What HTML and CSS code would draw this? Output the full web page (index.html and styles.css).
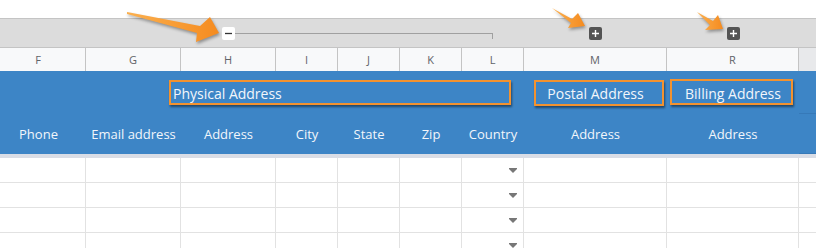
FILE: index.html
```html
<!DOCTYPE html>
<html lang="en">
<head>
<meta charset="UTF-8">
<link rel="stylesheet" href="styles.css">
<title>Grouped address columns</title>
</head>
<body>
<div class="sheet">

<div class="top-gap"></div>

<!-- column group controls -->
<div class="groups grid">
  <div class="grp grp-physical">
    <span class="btn btn-minus"><svg width="13" height="13" viewBox="0 0 13 13"><path d="M3 6.5h7" stroke="#333" stroke-width="1.3"/></svg></span>
    <span class="bracket"></span>
  </div>
  <div class="grp grp-postal">
    <span class="btn btn-plus"><svg width="13" height="13" viewBox="0 0 13 13"><path d="M3 6.5h7M6.5 3v7" stroke="#fff" stroke-width="1.4"/></svg></span>
  </div>
  <div class="grp grp-billing">
    <span class="btn btn-plus"><svg width="13" height="13" viewBox="0 0 13 13"><path d="M3 6.5h7M6.5 3v7" stroke="#fff" stroke-width="1.4"/></svg></span>
  </div>
</div>

<!-- column letters -->
<div class="letters grid">
  <div>F</div><div>G</div><div>H</div><div>I</div><div>J</div>
  <div>K</div><div>L</div><div>M</div><div>R</div><div class="blank"></div>
</div>

<!-- frozen header rows -->
<div class="band">
  <div class="titles grid">
    <div class="title t-physical"><span>Physical Address</span></div>
    <div class="title t-postal"><span>Postal Address</span></div>
    <div class="title t-billing"><span>Billing Address</span></div>
  </div>
  <div class="labels grid">
    <div>Phone</div><div>Email address</div><div>Address</div><div>City</div>
    <div>State</div><div>Zip</div><div>Country</div><div>Address</div>
    <div>Address</div><div class="edge"></div>
  </div>
</div>
<div class="freeze"></div>

<div class="rows">
  <div class="row grid">
    <div></div><div></div><div></div><div></div><div></div><div></div>
    <div class="dd"><svg width="8" height="5" viewBox="0 0 8 5"><path d="M0 0h8v1L4 5 0 1z" fill="#777"/></svg></div>
    <div></div><div></div><div class="blank"></div>
  </div>
  <div class="row grid">
    <div></div><div></div><div></div><div></div><div></div><div></div>
    <div class="dd"><svg width="8" height="5" viewBox="0 0 8 5"><path d="M0 0h8v1L4 5 0 1z" fill="#777"/></svg></div>
    <div></div><div></div><div class="blank"></div>
  </div>
  <div class="row grid">
    <div></div><div></div><div></div><div></div><div></div><div></div>
    <div class="dd"><svg width="8" height="5" viewBox="0 0 8 5"><path d="M0 0h8v1L4 5 0 1z" fill="#777"/></svg></div>
    <div></div><div></div><div class="blank"></div>
  </div>
  <div class="row grid">
    <div></div><div></div><div></div><div></div><div></div><div></div>
    <div class="dd"><svg width="8" height="5" viewBox="0 0 8 5"><path d="M0 0h8v1L4 5 0 1z" fill="#777"/></svg></div>
    <div></div><div></div><div class="blank"></div>
  </div>
</div>

<!-- callout arrows over the group buttons -->
<svg class="arrows" width="816" height="50" viewBox="0 0 816 50">
  <defs>
    <linearGradient id="og" x1="0" y1="0" x2="1" y2="0">
      <stop offset="0" stop-color="#fbb04f"/>
      <stop offset="1" stop-color="#f58b1f"/>
    </linearGradient>
  </defs>
  <g fill="url(#og)" class="arrow-shadow">
    <path d="M127 12 L200 26 L210 17 L219 33 L196 42 L197 33 L127 14 Z"/>
    <path d="M552 8 L572 19 L578 13 L585 26 L568 28 L571 23 Z"/>
    <path d="M697 12 L713 21 L718 15 L723 29 L705 30 L710 25 Z"/>
  </g>
</svg>

</div>
</body>
</html>
```

FILE: styles.css
```css
html, body {margin: 0; padding: 0; overflow: hidden; background: #fff;}
body {font-family: 'Open Sans', 'Liberation Sans', sans-serif; width: 816px; height: 248px;}

.sheet {position: relative; height: 248px;}
/* column F is partly scrolled off the left edge */
.grid {display: grid; margin-left: -9px;
  grid-template-columns: 95px 95px 95px 62px 62px 62px 62px 143px 132px 1fr;}

.top-gap {height: 18px;}

/* group bar */
.groups {height: 29px; box-sizing: border-box; padding-top: 8px;
  background: #dcdcdc; border-top: 1px solid #c4c4c4;}
.grp {display: flex; align-items: flex-start;}
.grp-physical {grid-column: 3 / 8; padding-left: 41px; margin-right: 31px;}
.grp-postal {grid-column: 8; justify-content: center;}
.grp-billing {grid-column: 9; justify-content: center; padding-left: 1px;}
.btn {display: block; width: 13px; height: 13px; border-radius: 2px;}
.btn svg {display: block;}
.btn-minus {background: #fff;}
.btn-plus {background: #545454;}
.bracket {flex: 1; height: 5px; margin-top: 6px;
  border-top: 1px solid #a0a0a0; border-right: 1px solid #a0a0a0;}

/* column letters */
.letters {height: 24px; box-sizing: border-box; border-top: 1px solid #c4c4c4;
  background: #f8f9fa; font-size: 11px; color: #5f6368;}
.letters div {border-right: 1px solid #c4c4c4; display: flex;
  align-items: center; justify-content: center;}
.letters .blank {background: #e8e9eb; border-right: none;}

/* blue header band */
.band {background: #3d85c6; color: #f2f6fb;}
.titles {height: 42px; font-size: 14px;}
.title {grid-row: 1; position: relative; display: flex; align-items: center;
  justify-content: center; height: 26px; margin-top: 9px;}
.t-physical {grid-column: 3 / 8; justify-content: flex-start;}
.t-physical span {margin-left: -8px;}
.t-postal {grid-column: 8;}
.t-billing {grid-column: 9;}
.title::after {content: ""; position: absolute; top: 0; bottom: 0;
  border: 2px solid #f3922f; box-shadow: 1px 2px 2px rgba(0, 0, 0, 0.45);}
.t-physical::after {left: -12px; right: 13px; bottom: 1px;}
.t-postal::after {left: 10px; right: 3px;}
.t-billing::after {left: 3px; right: 6px; top: -1px; bottom: 1px;}

.labels {height: 41px; font-size: 13px;}
.labels div {display: flex; align-items: center; justify-content: center;}
.labels .edge {border-top: 1px solid #3679b8; border-bottom: 1px solid #3679b8;}

.freeze {height: 4px; background: #d9dde6;}

/* data rows */
.row {height: 25px;}
.row div {border-right: 1px solid #e2e2e2; border-bottom: 1px solid #e2e2e2;}
.row .blank {border-right: none;}
.row .dd {display: flex; align-items: center; justify-content: flex-end;
  padding-right: 6px;}
.row .dd svg {display: block;}

/* callouts */
.arrows {position: absolute; left: 0; top: 0; pointer-events: none;}
.arrow-shadow {filter: drop-shadow(1px 2px 1.5px rgba(0, 0, 0, 0.35));}
```
